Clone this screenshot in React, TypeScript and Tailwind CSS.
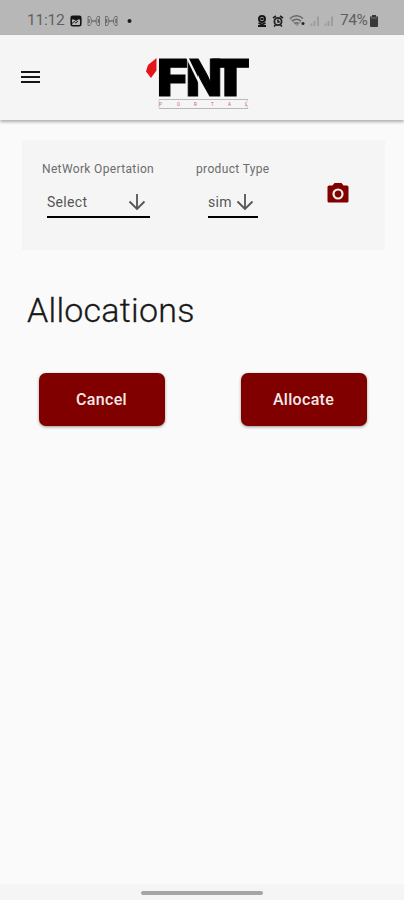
import type { ReactNode } from "react";

interface SelectFieldProps {
  label: string;
  value: string;
  className: string;
  boxClassName: string;
}

function StatusBar() {
  return (
    <div className="flex h-[35px] shrink-0 items-center bg-[#b7b7b7] pt-[7px] pl-[27px] pr-[25px] text-[15.5px] leading-none text-[#606060]">
      <span className="w-[43px] tracking-[-0.2px]">11:12</span>
      {/* notifications */}
      <svg width="66" height="14" viewBox="0 0 66 14" fill="none">
        <rect x="1.2" y="2.2" width="9.6" height="9.6" rx="1.5" stroke="#151515" strokeWidth="1.6" />
        <path d="M1.500 2h9v3.500H8L6 7 4 5.500H1.500z" fill="#151515" />
        <path d="M2 9.500l2.200-2 1.600 1.500L8 7" stroke="#151515" />
        {[17, 34.5].map((x) => (
          <g key={x} transform={`translate(${x} 0)`} stroke="#707070" strokeWidth="1">
            <path d="M3 2.500H1v9h2M10.500 2.500h2v9h-2M3 2.500c2 3 2 6 0 9M10.500 2.500c-2 3-2 6 0 9" />
            <path d="M4 7h5.500M2 5v4M11.500 5v4" strokeWidth="1.6" />
          </g>
        ))}
        <circle cx="59.5" cy="7" r="2" fill="#1c1c1c" />
      </svg>
      <div className="ml-auto flex items-center">
        <svg width="80" height="14" viewBox="0 0 80 14" fill="none">
          <circle cx="5" cy="5" r="3" stroke="#181818" strokeWidth="2" />
          <path d="M3.500 5h3M1.500 9l3.500 1.500L8.500 9M1 12h8" stroke="#181818" strokeWidth="1.8" />
          <circle cx="21" cy="7.500" r="3.600" stroke="#222" strokeWidth="1.8" />
          <path d="M16 4l3-2M26 4l-3-2M21 5.500v2.300h1.700M17 12.500l1.500-1.500M25 12.500L23.500 11" stroke="#222" strokeWidth="1.7" />
          <path d="M33 4.500c4-3.300 9-3.300 13 0M35 7c3-2.300 6-2.300 9 0M37.500 9.500c1.500-1 2.500-1 4 0" stroke="#666" strokeWidth="1.5" />
          <path d="M33.500 5l7 7M44 7l-3.500 4" stroke="#777" />
          <circle cx="46" cy="9.5" r="1.5" fill="#222" />
          <path d="M54.500 12V9.500M57.500 12V7M61 12V2.500M68.500 12V9.500M71.500 12V7M75 12V2.500" stroke="#9b9b9b" strokeWidth="1.8" />
        </svg>
        <span className="ml-[3px] w-[28px] tracking-[-0.5px]">74%</span>
        <svg width="10" height="14" viewBox="0 0 10 14" className="ml-px">
          <path d="M3 1h4v1.500h2V12a1 1 0 0 1-1 1H2a1 1 0 0 1-1-1V2.500h2z" fill="#383838" />
          <path d="M2 4h6" stroke="#777" />
        </svg>
      </div>
    </div>
  );
}

function Logo() {
  return (
    <svg width="106" height="54" viewBox="0 0 106 54" className="overflow-visible" role="img" aria-label="FNT Portal">
      <path d="M11.500 1v12.500L6 21l-5-6.500L3 8z" fill="#e5141b" />
      <g fontFamily="Inter, sans-serif" fontWeight="900" fontSize="51.5" fill="#000" stroke="#000">
        <text x="12" y="38.5" textLength="31" lengthAdjust="spacingAndGlyphs">F</text>
        <text x="41" y="38.5" textLength="36" lengthAdjust="spacingAndGlyphs">N</text>
        <text x="66" y="38.5" textLength="39" lengthAdjust="spacingAndGlyphs">T</text>
      </g>
      <path d="M41.500 -1l20 41" stroke="#f5f5f5" strokeWidth="2.2" />
      <path d="M14 42.500h89M14 51.500h89" stroke="#aaa" strokeWidth=".8" />
      <path d="M14 42.500v9M103 42.500l-2 4 2 5" stroke="#bbb" strokeWidth=".6" fill="none" />
      <g fontFamily="Roboto, sans-serif" fontSize="4.5" fill="#cf5860">
        <text x="14 32 49 66 83 100" y="48.5">PORTAL</text>
      </g>
    </svg>
  );
}

function Header() {
  return (
    <header className="flex h-[85px] shrink-0 items-start bg-[#f5f5f5] shadow-[0_2px_3px_rgba(0,0,0,0.3)]">
      <button aria-label="Menu" className="mt-[35.5px] ml-[21px] flex w-[19px] flex-col gap-[3px]">
        <span className="h-[2px] bg-[#161616]" />
        <span className="h-[2px] bg-[#161616]" />
        <span className="h-[2px] bg-[#161616]" />
      </button>
      <div className="mt-[22px] ml-[105px]">
        <Logo />
      </div>
    </header>
  );
}

function ArrowDown() {
  return (
    <svg width="18" height="18" viewBox="0 0 18 18" fill="none" stroke="#555" strokeWidth="1.8">
      <path d="M9 1v15M1.500 8.500L9 16l7.500-7.500" />
    </svg>
  );
}

function SelectField({ label, value, className, boxClassName }: SelectFieldProps) {
  return (
    <div className={className}>
      <div className="text-[12px] leading-[14px] tracking-[0.35px] whitespace-nowrap text-[#6c6c6c]">
        {label}
      </div>
      <div className={boxClassName}>
        <span className="text-[14px] leading-[18px] tracking-[0.3px] text-[#555]">{value}</span>
        <ArrowDown />
      </div>
    </div>
  );
}

function ActionButton({ children }: { children: ReactNode }) {
  return (
    <button className="h-[53px] w-[126px] rounded-[7px] bg-[#800000] text-[16px] font-medium tracking-[0.3px] text-[#f6e9e9] shadow-[0_1px_3px_rgba(0,0,0,0.4)]">
      {children}
    </button>
  );
}

export default function App() {
  return (
    <div className="flex h-[900px] w-[404px] flex-col overflow-hidden bg-[#fafafa] font-[Roboto,sans-serif]">
      <StatusBar />
      <Header />
      <main className="flex-1">
        <section className="mt-5 ml-[22px] flex h-[110px] w-[363px] bg-[#f5f5f5] pt-[22px]">
          <SelectField
            label="NetWork Opertation"
            value="Select"
            className="ml-5 w-[154px]"
            boxClassName="mt-[17px] ml-[5px] flex h-[25px] w-[103px] items-start justify-between border-b-2 border-black pr-1"
          />
          <SelectField
            label="product Type"
            value="sim"
            className="w-[131px]"
            boxClassName="mt-[17px] ml-3 flex h-[25px] w-[50px] items-start justify-between border-b-2 border-black pr-1"
          />
          <svg width="22" height="20" viewBox="0 0 22 20" className="mt-[21px]">
            <path
              d="M7.500 0h7l2 2.500H20A1.500 1.500 0 0 1 21.500 4v14a1.500 1.500 0 0 1-1.500 1.500H2A1.500 1.500 0 0 1 .5 18V4A1.500 1.500 0 0 1 2 2.500h3.500z"
              fill="#800000"
            />
            <circle cx="11" cy="11" r="4.5" fill="#800000" stroke="#f8eded" strokeWidth="2.2" />
          </svg>
        </section>
        <h1 className="mt-10 ml-[27px] text-[34px] leading-10 font-light tracking-[0.25px] text-[#181818] [-webkit-text-stroke:0.3px_#181818]">
          Allocations
        </h1>
        <div className="mt-[43px] ml-[38.5px] flex w-[328px] justify-between">
          <ActionButton>Cancel</ActionButton>
          <ActionButton>Allocate</ActionButton>
        </div>
      </main>
      <footer className="flex h-4 shrink-0 justify-center bg-[#f5f5f5] pt-[7px]">
        <div className="h-1 w-[122px] rounded-full bg-[#a5a5a5]" />
      </footer>
    </div>
  );
}
